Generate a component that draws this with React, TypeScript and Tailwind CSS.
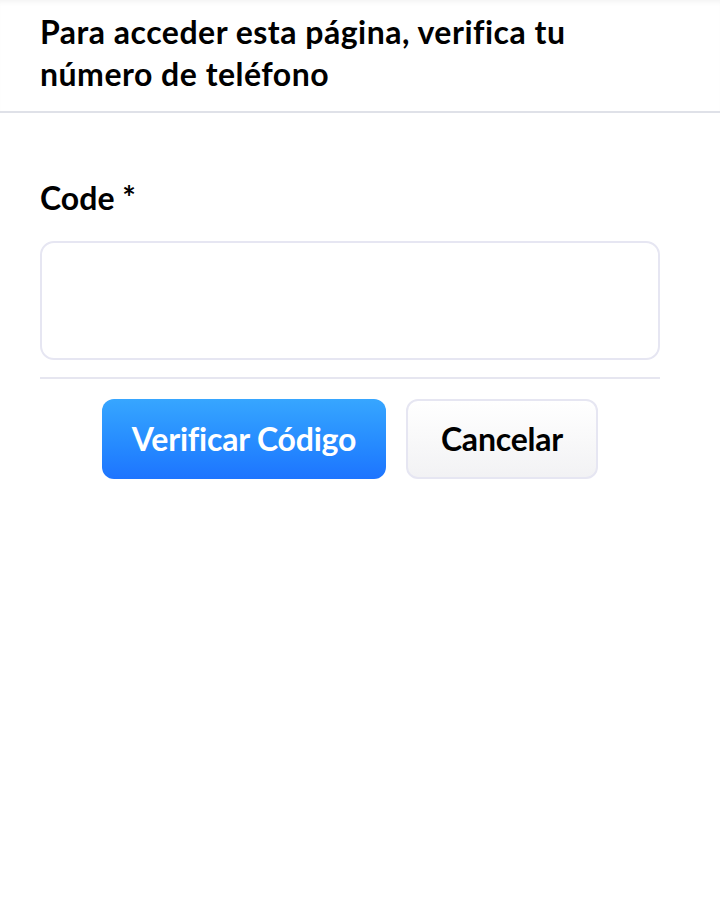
export default function App() {
  return (
    <div className="min-h-screen bg-white text-black font-['Lato',_'Liberation_Sans',_sans-serif]">
      {/* Header */}
      <header className="pl-10 pr-[60px] pt-[11px] pb-[16px] border-b-2 border-[#dfe1e8] shadow-[inset_0_5px_5px_-3px_rgba(0,0,0,0.05)]">
        <h1 className="text-[32px] leading-[42px] font-bold tracking-[0.5px] max-w-[580px]">
          Para acceder esta página, verifica tu número de teléfono
        </h1>
      </header>

      {/* Form */}
      <main className="pl-10 pr-[60px] pt-[65px]">
        <label htmlFor="code" className="block text-[32px] leading-[40px] font-bold">
          Code *
        </label>
        <input
          id="code"
          type="text"
          className="mt-[23px] w-full h-[119px] rounded-[14px] border-2 border-[#e6e6f2] bg-white px-4 text-2xl focus:outline-none"
        />
        <div className="mt-[17px] h-[2px] bg-[#e6e6f0]" />
        <div className="mt-[20px] flex justify-center gap-5">
          <button className="h-[80px] w-[284px] rounded-[12px] bg-gradient-to-b from-[#37a6ff] to-[#1e74ff] text-white text-[32px] font-bold tracking-[-0.2px]">
            Verificar Código
          </button>
          <button className="h-[80px] w-[192px] rounded-[12px] border-2 border-[#e6e6f2] bg-gradient-to-b from-white to-[#f2f2f4] text-black text-[32px] font-bold tracking-[-0.2px]">
            Cancelar
          </button>
        </div>
      </main>
    </div>
  )
}
